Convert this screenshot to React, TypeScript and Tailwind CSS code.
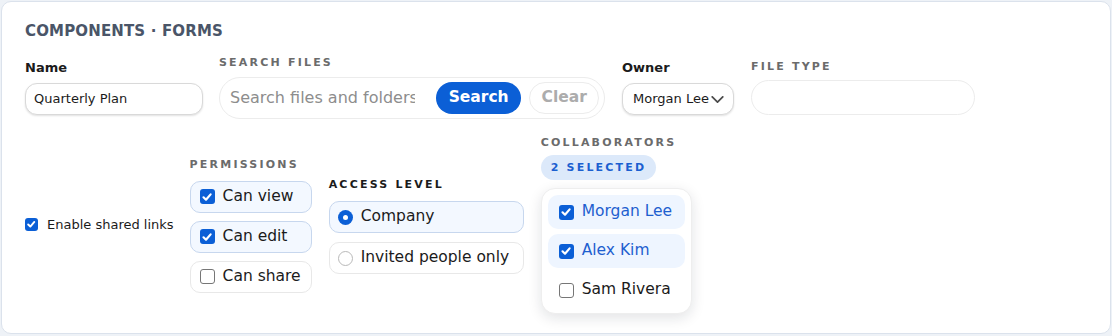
const font = { fontFamily: '"DejaVu Sans", Verdana, sans-serif' };

function Check({ checked, size = 15 }: { checked: boolean; size?: number }) {
    if (!checked) {
        return <span className="shrink-0 rounded-[3px] border border-[#767676] bg-white" style={{ width: size, height: size }} />;
    }
    return (
        <span className="shrink-0 rounded-[3px] bg-[#0b5fd6] flex items-center justify-center" style={{ width: size, height: size }}>
            <svg viewBox="0 0 12 12" className="w-[80%] h-[80%]" fill="none" stroke="white" strokeWidth="2.2" strokeLinecap="round" strokeLinejoin="round">
                <path d="M2.5 6.3 5 8.7 9.6 3.4" />
            </svg>
        </span>
    );
}

function Radio({ checked }: { checked: boolean }) {
    if (!checked) return <span className="w-[15px] h-[15px] shrink-0 rounded-full border border-[#b9b9b9] bg-white" />;
    return (
        <span className="w-[15px] h-[15px] shrink-0 rounded-full bg-[#0b5fd6] flex items-center justify-center">
            <span className="w-[5px] h-[5px] rounded-full bg-white" />
        </span>
    );
}

const capLabel = 'text-[11px] leading-[14px] font-bold uppercase tracking-[0.2em]';

const PERMS = [
    { label: 'Can view', on: true },
    { label: 'Can edit', on: true },
    { label: 'Can share', on: false },
];

const PEOPLE = [
    { name: 'Morgan Lee', on: true },
    { name: 'Alex Kim', on: true },
    { name: 'Sam Rivera', on: false },
];

export default function App() {
    return (
        <div className="w-[1112px] h-[336px] p-px bg-[#eef2f7]" style={font}>
            <div className="h-[333px] rounded-[10px] border border-[#dbe2ec] bg-white pl-[23px] pt-[19px]">
                <h1 className="text-[15px] leading-5 font-bold uppercase tracking-[0.01em] text-[#4a5568]">Components · Forms</h1>

                <div className="mt-[15px] flex items-center gap-4">
                    <div className="flex flex-col gap-[7px]">
                        <label className="text-[13px] leading-4 font-bold text-[#1b1b1b]">Name</label>
                        <div className="w-[178px] h-8 rounded-[12px] border border-[#d9d9d9] bg-white shadow-[0_1px_2px_rgba(0,0,0,0.12)] flex items-center px-2 text-[13px] text-[#1b1b1b]">
                            Quarterly Plan
                        </div>
                    </div>

                    <div className="flex flex-col gap-[7px]">
                        <span className={`${capLabel} text-[#6b6b6b]`}>Search files</span>
                        <div className="w-[386px] h-[42px] rounded-full border border-[#ececec] bg-white flex items-center pl-[10px] pr-[5px]">
                            <span className="w-[186px] overflow-hidden whitespace-nowrap text-[16px] text-[#8d8d8d]">Search files and folders</span>
                            <button className="ml-[21px] w-[86px] h-8 rounded-full bg-[#0b5fd6] text-white text-[15.5px] font-bold">Search</button>
                            <button className="ml-2 w-[70px] h-8 rounded-full border border-[#ececec] bg-white text-[#acacac] text-[15.5px] font-bold">Clear</button>
                        </div>
                    </div>

                    <div className="flex flex-col gap-[7px] ml-px">
                        <label className="text-[13px] leading-4 font-bold text-[#1b1b1b]">Owner</label>
                        <div className="w-[112px] h-8 rounded-[12px] border border-[#d9d9d9] bg-white shadow-[0_1px_2px_rgba(0,0,0,0.12)] flex items-center pl-[10px] pr-[9px] text-[13px] text-[#1b1b1b]">
                            <span>Morgan Lee</span>
                            <svg viewBox="0 0 14 8" className="w-[13px] h-[7px] ml-auto" fill="none" stroke="#4b4b4b" strokeWidth="2" strokeLinecap="round" strokeLinejoin="round">
                                <path d="M1 1 7 7 13 1" />
                            </svg>
                        </div>
                    </div>

                    <div className="flex flex-col gap-[6px] ml-px">
                        <span className={`${capLabel} text-[#6b6b6b]`}>File type</span>
                        <div className="w-[224px] h-[35px] rounded-full border border-[#ececec] bg-white" />
                    </div>
                </div>

                <div className="mt-[17px] flex items-center gap-4">
                    <label className="flex items-center gap-[9px] text-[13px] text-[#1b1b1b] -mt-px">
                        <Check checked size={13} />
                        Enable shared links
                    </label>

                    <div className="flex flex-col gap-[9px]">
                        <span className={`${capLabel} text-[#6b6b6b]`}>Permissions</span>
                        <div className="flex flex-col gap-2">
                            {PERMS.map((p) => (
                                <div
                                    key={p.label}
                                    className={`h-8 rounded-[10px] border flex items-center gap-2 pl-[9px] pr-[10px] text-[15.5px] text-[#1b1b1b] ${p.on ? 'bg-[#f3f8ff] border-[#c7d7ee]' : 'bg-white border-[#e8e8e8]'}`}>
                                    <Check checked={p.on} />
                                    {p.label}
                                </div>
                            ))}
                        </div>
                    </div>

                    <div className="flex flex-col gap-[9px] ml-px mt-[2px]">
                        <span className={`${capLabel} text-[#1b1b1b]`}>Access level</span>
                        <div className="flex flex-col gap-[9px]">
                            {['Company', 'Invited people only'].map((r, i) => (
                                <div
                                    key={r}
                                    className={`w-[195px] h-8 rounded-[10px] border flex items-center gap-2 px-2 text-[15.5px] text-[#1b1b1b] ${i === 0 ? 'bg-[#f3f8ff] border-[#c7d7ee]' : 'bg-white border-[#e8e8e8]'}`}>
                                    <Radio checked={i === 0} />
                                    {r}
                                </div>
                            ))}
                        </div>
                    </div>

                    <div className="flex flex-col items-start ml-px">
                        <span className={`${capLabel} text-[#6b6b6b]`}>Collaborators</span>
                        <span className={`${capLabel} mt-[5px] h-[25px] px-[10px] rounded-full bg-[#dce9fa] text-[#1b5fd0] flex items-center`}>2 selected</span>
                        <div className="mt-2 w-[151px] rounded-[14px] border border-[#eeeeee] bg-white shadow-[0_4px_14px_rgba(15,23,42,0.12)] px-[6px] pt-[6px] pb-[6px] flex flex-col gap-[5px]">
                            {PEOPLE.map((p) => (
                                <div
                                    key={p.name}
                                    className={`h-[34px] rounded-[10px] flex items-center gap-2 pl-[11px] text-[15.5px] ${p.on ? 'bg-[#eef5ff] text-[#1e5fcf]' : 'text-[#1b1b1b]'}`}>
                                    <Check checked={p.on} />
                                    {p.name}
                                </div>
                            ))}
                        </div>
                    </div>
                </div>
            </div>
        </div>
    );
}
